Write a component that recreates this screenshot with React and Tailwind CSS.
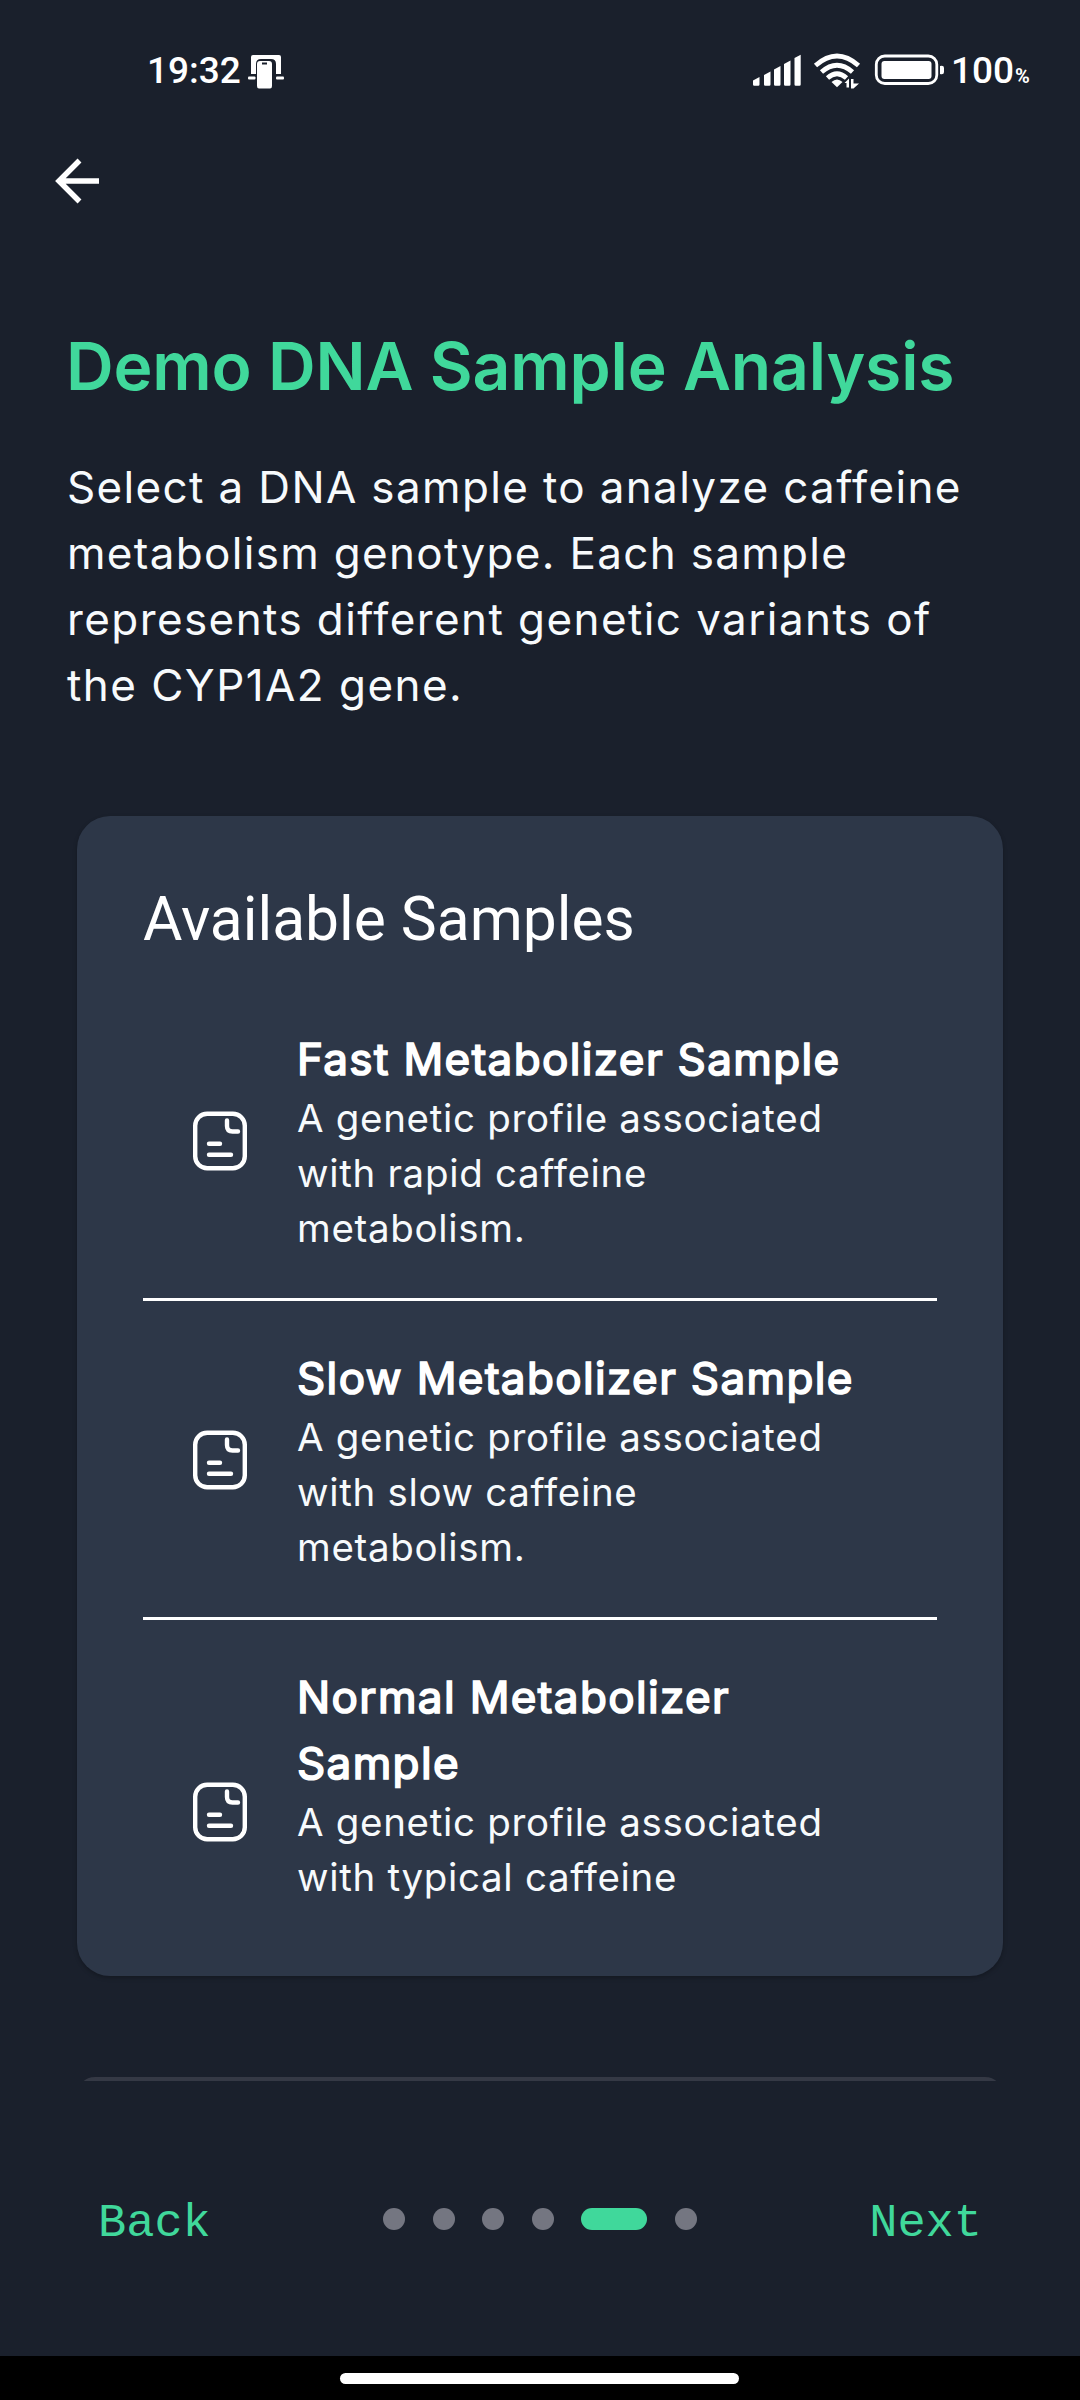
import React from 'react';

const samples = [
  { lines: ['Fast Metabolizer Sample'], text: ['A genetic profile associated', 'with rapid caffeine', 'metabolism.'], pad: 'pt-[67px]' },
  { lines: ['Slow Metabolizer Sample'], text: ['A genetic profile associated', 'with slow caffeine', 'metabolism.'], pad: 'pt-[44px]' },
  { lines: ['Normal Metabolizer', 'Sample'], text: ['A genetic profile associated', 'with typical caffeine'], pad: 'pt-[44px]', textPad: 'pb-[55px]' },
];

function ScreenMirrorIcon() {
  return (
    <svg className="ml-[7px] h-[35px] w-[38px]" viewBox="0 0 38 35" fill="#fff">
      <path d="M5 0H31Q33 0 33 2V19H28V9Q28 4 23 4H13Q8 4 8 9V19H3V2Q3 0 5 0Z" />
      <rect x="0" y="21.5" width="7.5" height="3" rx="1" />
      <rect x="28" y="21.5" width="8" height="3" rx="1" />
      <path fillRule="evenodd" d="M9 9Q9 6 12 6H21Q24 6 24 9V31Q24 33.500 22 33.500H11Q9 33.500 9 31ZM14 7.500V9.500H19V7.500Z" />
    </svg>
  );
}

function StatusIcons() {
  return (
    <svg className="h-[60px] w-[206px]" viewBox="0 0 206 60" fill="#fff">
      <path d="M0 40.500L6.500 37V44.500Q6.500 45.700 5.300 45.700H1.200Q0 45.700 0 44.500ZM11 35L17.500 31.500V44.500Q17.500 45.700 16.300 45.700H12.200Q11 45.700 11 44.500ZM21 29.500L27.500 26V44.500Q27.500 45.700 26.300 45.700H22.200Q21 45.700 21 44.500ZM31 24L37.500 20.500V44.500Q37.500 45.700 36.300 45.700H32.200Q31 45.700 31 44.500ZM41.500 18L47.700 14.800V44.500Q47.700 45.700 46.500 45.700H42.700Q41.500 45.700 41.500 44.500Z" />
      <g fill="none" stroke="#fff" strokeWidth="4.800">
        <path d="M62.500 25.500Q84 6.500 105.500 25.500" />
        <path d="M68.500 32Q84 18.500 99.500 32" />
        <path d="M74.500 38Q84 29.500 93.500 38" />
      </g>
      <path d="M78.500 42Q84 36.800 89.500 42L84 47.300Z" />
      <path d="M91.500 43L96 38.500V47.500H93.500V43ZM98 39H100.500V43.500L106 43.500L100.500 48.500H98Z" />
      <rect x="123.300" y="16" width="60.500" height="27.500" rx="8.500" fill="none" stroke="#fff" strokeWidth="2.800" />
      <rect x="128.500" y="21" width="50" height="18" rx="3" />
      <path d="M187 26Q191 25 191 28V32Q191 35 187 34Z" />
    </svg>
  );
}

function NoteIcon() {
  return (
    <svg className="h-[66px] w-[66px] shrink-0" viewBox="0 0 66 66" fill="none" stroke="#fff" strokeWidth="4.400" strokeLinecap="round" strokeLinejoin="round">
      <rect x="8.200" y="5.800" width="49.600" height="54.500" rx="12" />
      <path d="M40 12.500V18Q40 23.500 45.500 23.500H51" />
      <path d="M22 35.700H33M22 46.700H44" />
    </svg>
  );
}

export default function App() {
  return (
    <div className="flex h-[2400px] w-[1080px] flex-col overflow-hidden bg-[#1a202c] font-['Inter',sans-serif] text-white">
      <header className="flex h-[120px] shrink-0 items-start pt-[40px] font-['Roboto',sans-serif] text-[37px] font-medium leading-[60px]">
        <div className="flex w-[753px] items-start pl-[147px]">
          <span className="mt-px">19:32</span>
          <div className="pt-[15px]"><ScreenMirrorIcon /></div>
        </div>
        <StatusIcons />
        <div className="-ml-[8px] mt-px flex whitespace-nowrap">100<span className="ml-px pt-[5px] text-[20px] font-bold">%</span></div>
      </header>

      <div className="h-[130px] shrink-0 pl-[55px] pt-[38px]">
        <svg className="h-[46px] w-[46px]" viewBox="0 0 46 46" fill="none" stroke="#fff" strokeWidth="5.500">
          <path d="M44 23H5M24.500 2.500L4 23L24.500 43.500" />
        </svg>
      </div>

      <main className="h-[1831px] shrink-0 overflow-hidden">
        <h1 className="ml-[66px] mt-[74px] whitespace-nowrap text-[66px] font-semibold leading-[84px] tracking-[-0.170px] text-[#40d89b]">Demo DNA Sample Analysis</h1>
        <p className="ml-[67px] mt-[46px] whitespace-nowrap text-[44px] leading-[66px] text-[#f7fafc]">
          <span className="block tracking-[1.350px]">Select a DNA sample to analyze caffeine</span>
          <span className="block tracking-[1.310px]">metabolism genotype. Each sample</span>
          <span className="block tracking-[1.410px]">represents different genetic variants of</span>
          <span className="block tracking-[1.450px]">the CYP1A2 gene.</span>
        </p>

        <section className="mx-[77px] mt-[98px] h-[1160px] overflow-hidden rounded-[33px] bg-[#2d3748] px-[66px] pt-[65px] shadow-[0_2px_4px_rgba(0,0,0,0.25)]">
          <h2 className="mb-px font-['Roboto',sans-serif] text-[60.500px] font-normal leading-[77px]">Available Samples</h2>
          {samples.map((s, i) => (
            <div key={i} className="border-b-[3px] border-white last:border-b-0">
              <div className={`flex items-center pb-[42px] pl-[44px] ${s.pad}`}>
                <NoteIcon />
                <div className="ml-[44px] whitespace-nowrap">
                  <h3 className="-mb-px text-[44px] leading-[66px] tracking-[1.375px] [-webkit-text-stroke:1.700px_white]">
                    {s.lines.map((l) => <div key={l}>{l}</div>)}
                  </h3>
                  <p className={`text-[38.500px] leading-[55px] tracking-[0.680px] text-[#f7fafc] ${s.textPad || ''}`}>
                    {s.text.map((l) => <span key={l} className="block">{l}</span>)}
                  </p>
                </div>
              </div>
            </div>
          ))}
        </section>
        <div className="mx-[77px] mt-[101px] h-[60px] rounded-[18px] bg-[#353945]" />
      </main>

      <footer className="flex h-[275px] shrink-0 items-start justify-between px-[98px] pt-[105px] font-['Liberation_Mono',monospace] text-[47px] leading-[66px] text-[#40d89b]">
        <span className="w-[115px] pt-[5px]">Back</span>
        <div className="flex h-[66px] items-center gap-[27.500px]">
          {[0, 1, 2, 3].map((n) => <i key={n} className="h-[22px] w-[22px] rounded-full bg-[#747681]" />)}
          <i className="h-[22px] w-[66px] rounded-full bg-[#40d89b]" />
          <i className="h-[22px] w-[22px] rounded-full bg-[#747681]" />
        </div>
        <span className="w-[115px] pt-[5px] text-right">Next</span>
      </footer>
      <div className="flex h-[44px] shrink-0 justify-center bg-black pr-[2px] pt-[17px]">
        <div className="h-[11px] w-[399px] rounded-full bg-white" />
      </div>
    </div>
  );
}
